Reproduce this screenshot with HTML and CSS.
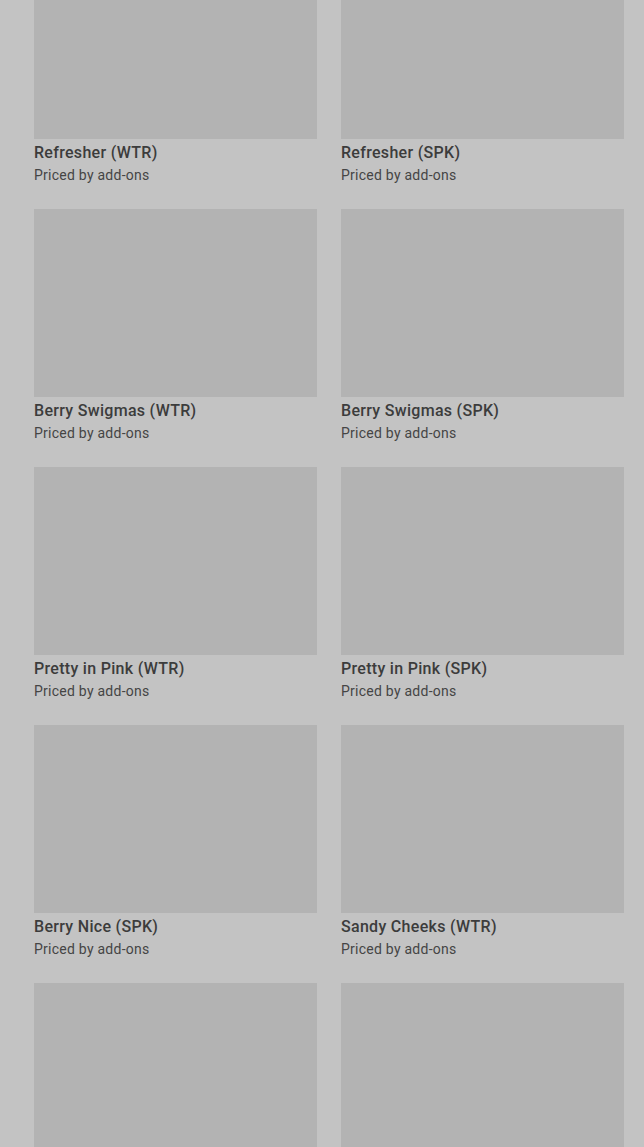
FILE: index.html
```html
<!DOCTYPE html>
<html lang="en">
<head>
    <meta charset="UTF-8">
    <meta name="viewport" content="width=device-width, initial-scale=1.0">
    <title>Menu</title>
    <link rel="stylesheet" href="styles.css">
</head>

<body>
    <div class="menu-grid">
        <div class="item">
            <div class="item-img"></div>
            <div class="item-name">Refresher (WTR)</div>
            <div class="item-price">Priced by add-ons</div>
        </div>
        <div class="item">
            <div class="item-img"></div>
            <div class="item-name">Refresher (SPK)</div>
            <div class="item-price">Priced by add-ons</div>
        </div>
        <div class="item">
            <div class="item-img"></div>
            <div class="item-name">Berry Swigmas (WTR)</div>
            <div class="item-price">Priced by add-ons</div>
        </div>
        <div class="item">
            <div class="item-img"></div>
            <div class="item-name">Berry Swigmas (SPK)</div>
            <div class="item-price">Priced by add-ons</div>
        </div>
        <div class="item">
            <div class="item-img"></div>
            <div class="item-name">Pretty in Pink (WTR)</div>
            <div class="item-price">Priced by add-ons</div>
        </div>
        <div class="item">
            <div class="item-img"></div>
            <div class="item-name">Pretty in Pink (SPK)</div>
            <div class="item-price">Priced by add-ons</div>
        </div>
        <div class="item">
            <div class="item-img"></div>
            <div class="item-name">Berry Nice (SPK)</div>
            <div class="item-price">Priced by add-ons</div>
        </div>
        <div class="item">
            <div class="item-img"></div>
            <div class="item-name">Sandy Cheeks (WTR)</div>
            <div class="item-price">Priced by add-ons</div>
        </div>
        <div class="item">
            <div class="item-img"></div>
            <div class="item-name">Sandy Cheeks (SPK)</div>
            <div class="item-price">Priced by add-ons</div>
        </div>
        <div class="item">
            <div class="item-img"></div>
            <div class="item-name">Berry Nice (WTR)</div>
            <div class="item-price">Priced by add-ons</div>
        </div>
    </div>
</body>
</html>
```

FILE: styles.css
```css
/* page is dimmed behind an overlay, so everything is grey */
body {
    margin: 0;
    background-color: #c3c3c3;
    font-family: Roboto, "Liberation Sans", Arial, sans-serif;
    color: #3c3c3c;
}

/* two column product grid, scrolled down a bit */
.menu-grid {
    display: grid;
    grid-template-columns: 1fr 1fr;
    column-gap: 24px;
    row-gap: 24px;
    padding: 0 20px 0 34px;
    margin-top: -49px;
}

.item-img {
    height: 188px;
    background-color: #b3b3b3;
}

.item-name {
    margin-top: 2px;
    font-size: 16px;
    line-height: 24px;
    font-weight: 500;
    letter-spacing: 0.3px;
}

.item-price {
    font-size: 14px;
    line-height: 20px;
    letter-spacing: 0.25px;
    color: #454545;
}
```
